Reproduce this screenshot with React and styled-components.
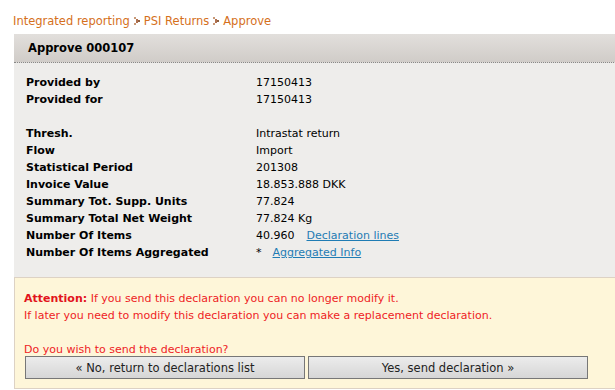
import React from 'react';
import styled, { createGlobalStyle } from 'styled-components';

const GlobalStyle = createGlobalStyle`
    body {
        margin: 0;
        background: #ffffff;
        font-family: 'DejaVu Sans', Verdana, sans-serif;
        font-size: 11px;
        color: #000;
    }
`

const Page = styled.div`
    width: 615px;
    height: 390px;
    overflow: hidden;
    padding: 13px 0 0 14px;
    box-sizing: border-box;
`

const Crumbs = styled.div`
    display: flex;
    align-items: center;
    gap: 4px;
    height: 16px;
    margin-left: -1px;
    font-size: 11.5px;
`

const Crumb = styled.span`
    color: #d5701c;
`

const Panel = styled.div`
    margin-top: 5px;
    width: 602px;
`

const PanelHeader = styled.div`
    height: 28px;
    display: flex;
    align-items: center;
    padding-left: 14px;
    font-weight: bold;
    font-size: 11.5px;
    background: linear-gradient(#e2dfdc, #d0ccc8);
    border-bottom: 1px dotted #888;
`

const PanelBody = styled.div`
    background: #eeedeb;
    padding: 11px 0 16px 12px;
`

const Grid = styled.div`
    display: grid;
    grid-template-columns: 230px 1fr;
    line-height: 17px;
`

const Label = styled.div`
    font-weight: bold;
    height: 17px;
`

const Value = styled.div`
    height: 17px;
    display: flex;
    gap: ${p => p.gap || 0}px;
`

const Spacer = styled.div`
    grid-column: 1 / 3;
    height: 17px;
`

const Link = styled.a`
    color: #1f7cb4;
    text-decoration: underline;
    cursor: pointer;
`

const Warning = styled.div`
    background: #fef6d9;
    border: 1px solid #ddd2c4;
    padding: 12px 0 9px 9px;
    color: #ee1c25;
    line-height: 17px;
`

const Strong = styled.span`
    font-weight: bold;
    color: #e2141c;
`

const Blank = styled.div`
    height: 17px;
`

const Buttons = styled.div`
    display: flex;
    gap: 3px;
    margin-top: -2px;
    margin-left: 1px;
`

const Button = styled.button`
    width: 280px;
    height: 23px;
    font-family: 'DejaVu Sans', Verdana, sans-serif;
    font-size: 11.5px;
    color: #222;
    background: linear-gradient(#ececec, #d6d6d6);
    border: 1px solid #777;
    padding: 0;
`

const Sep = () => (
    <svg width="6" height="8" viewBox="0 0 6 8">
        <rect x="0" y="0" width="2" height="2" fill="#c89a78" />
        <rect x="2" y="2" width="2" height="2" fill="#b07050" />
        <rect x="4" y="3" width="2" height="2" fill="#8f6040" />
        <rect x="2" y="4" width="2" height="2" fill="#b07050" />
        <rect x="0" y="6" width="2" height="2" fill="#c89a78" />
    </svg>
)

const rows = [
    ['Thresh.', 'Intrastat return'],
    ['Flow', 'Import'],
    ['Statistical Period', '201308'],
    ['Invoice Value', '18.853.888 DKK'],
    ['Summary Tot. Supp. Units', '77.824'],
    ['Summary Total Net Weight', '77.824 Kg'],
]

const App = () => {
    return (
        <Page>
            <GlobalStyle />
            <Crumbs>
                <Crumb>Integrated reporting</Crumb>
                <Sep />
                <Crumb>PSI Returns</Crumb>
                <Sep />
                <Crumb>Approve</Crumb>
            </Crumbs>
            <Panel>
                <PanelHeader>Approve 000107</PanelHeader>
                <PanelBody>
                    <Grid>
                        <Label>Provided by</Label>
                        <Value>17150413</Value>
                        <Label>Provided for</Label>
                        <Value>17150413</Value>
                        <Spacer />
                        {rows.map(([l, v]) => (
                            <React.Fragment key={l}>
                                <Label>{l}</Label>
                                <Value>{v}</Value>
                            </React.Fragment>
                        ))}
                        <Label>Number Of Items</Label>
                        <Value gap={12}>40.960 <Link>Declaration lines</Link></Value>
                        <Label>Number Of Items Aggregated</Label>
                        <Value gap={11}>* <Link>Aggregated Info</Link></Value>
                    </Grid>
                </PanelBody>
                <Warning>
                    <div><Strong>Attention:</Strong> If you send this declaration you can no longer modify it.</div>
                    <div>If later you need to modify this declaration you can make a replacement declaration.</div>
                    <Blank />
                    <div>Do you wish to send the declaration?</div>
                    <Buttons>
                        <Button>« No, return to declarations list</Button>
                        <Button>Yes, send declaration »</Button>
                    </Buttons>
                </Warning>
            </Panel>
        </Page>
    )
};

export default App;
